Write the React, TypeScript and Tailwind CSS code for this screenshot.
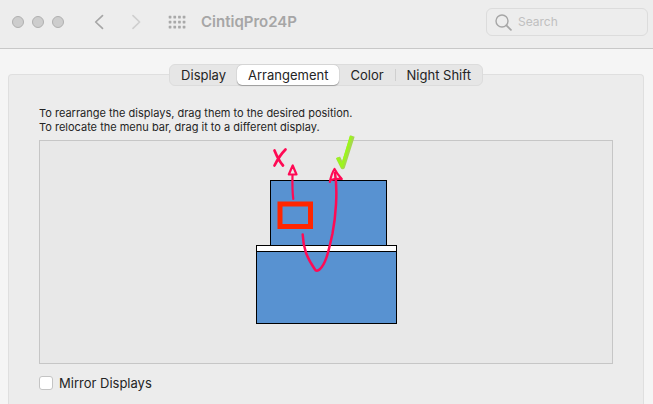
const instructions = [
  "To rearrange the displays, drag them to the desired position.",
  "To relocate the menu bar, drag it to a different display.",
];

function Toolbar() {
  return (
    <header className="flex h-[49px] items-center border-b border-[#c8c8c8] bg-[#ededed] pr-[5px] pb-1 pl-3">
      <div className="flex gap-2">
        <button aria-label="Close" className="size-3 rounded-full border border-[#b0b0b0] bg-[#cdcdcd]" />
        <button aria-label="Minimize" className="size-3 rounded-full border border-[#b0b0b0] bg-[#cdcdcd]" />
        <button aria-label="Zoom" className="size-3 rounded-full border border-[#b0b0b0] bg-[#cdcdcd]" />
      </div>
      <div className="ml-7 flex gap-6">
        <button aria-label="Back" className="text-[#a6a6a6]">
          <svg width="14" height="16" viewBox="0 0 14 16" fill="none" stroke="currentColor" strokeWidth="1.7" strokeLinecap="round" strokeLinejoin="round">
            <path d="M10.5 1.7 3.7 8l6.8 6.3" />
          </svg>
        </button>
        <button aria-label="Forward" className="text-[#cfcfcf]">
          <svg width="14" height="16" viewBox="0 0 14 16" fill="none" stroke="currentColor" strokeWidth="1.7" strokeLinecap="round" strokeLinejoin="round">
            <path d="M3 1.7 9.6 8 3 14.3" />
          </svg>
        </button>
      </div>
      <button aria-label="Show all" className="ml-6 text-[#a9a9a9]">
        <svg width="18" height="14" viewBox="0 0 18 14" fill="currentColor">
          {[0, 5, 10].map((y) =>
            [0, 4.7, 9.4, 14].map((x) => (
              <rect key={`${x}-${y}`} x={x + 0.7} y={y + 0.7} width="2.7" height="2.7" rx=".4" />
            ))
          )}
        </svg>
      </button>
      <h1 className="ml-[15px] text-[15px] font-semibold text-[#a6a6a6]">CintiqPro24P</h1>
      <label className="ml-auto flex h-7 w-[162px] items-center gap-1.5 rounded-md border border-[#dcdcdc] px-2">
        <svg className="shrink-0 text-[#a6a6a6]" width="17" height="17" viewBox="0 0 17 17" fill="none" stroke="currentColor" strokeWidth="1.4" strokeLinecap="round">
          <circle cx="7" cy="7" r="6" />
          <path d="m11.4 11.4 4.5 4.5" strokeWidth="1.8" />
        </svg>
        <input
          type="search"
          placeholder="Search"
          aria-label="Search"
          className="w-full min-w-0 bg-transparent text-xs outline-none placeholder:text-[#c0c0c0]"
        />
      </label>
    </header>
  );
}

function Tabs() {
  return (
    <nav className="relative z-10 mx-auto flex h-[22px] w-fit items-stretch rounded-md border border-[#dcdcdc] bg-[#e6e6e6] text-[13px] leading-5">
      <button className="px-[11px]">Display</button>
      <button className="rounded-[5px] bg-white px-[11px] shadow-[0_0_1px_#0005,0_1px_1px_#0004]">Arrangement</button>
      <button className="px-[11px]">Color</button>
      <span className="my-1 w-px bg-[#cfcfcf]" />
      <button className="px-[11px]">Night Shift</button>
    </nav>
  );
}

function Annotations() {
  return (
    <svg
      className="pointer-events-none absolute top-0 left-0 overflow-visible"
      width="140"
      height="144"
      viewBox="0 0 140 144"
      fill="none"
      strokeLinecap="round"
      strokeLinejoin="round"
    >
      <rect x="24" y="24" width="30.5" height="22.5" stroke="#ff2600" strokeWidth="5" strokeLinejoin="miter" />
      <g stroke="#ff0a54" strokeWidth="2.2">
        <path d="M18.500-29.500c2 5 5 11 8.500 15M29.500-30.500c-4 4-8 10-11 16" strokeWidth="2.7" />
        <path d="M37.300 19C36.300 12 36.300 4 36.500-5" />
        <path d="m36.700-14.500-3.900 9h7.700z" />
        <path d="M46.700 54.500c.6 14 4 23 12.300 35 .6 1.500 3 1.500 4.500 0 7-6 9.500-21 13-36C79.500 38 82 12 79-7" strokeWidth="2.500" />
        <path d="M73.800 2c1-5 2-9 4.700-13 2 4 4.500 7 7.300 10-4-.3-8 0-11.500 1.200" />
      </g>
      <path d="m82-22.500 4.700 9.500L96.500-44" stroke="#a5d94b" strokeWidth="4.5" strokeLinecap="butt" />
      <path d="m81.300-22.500 4.700 9L95-44" stroke="#9cf51c" strokeWidth="2.6" strokeLinecap="butt" />
    </svg>
  );
}

function Arrangement() {
  return (
    <div className="flex h-56 items-center justify-center border border-[#c6c6c6] bg-[#e8e8e8]">
      <div className="relative h-36 w-[140px]">
        <div className="absolute top-0 left-3.5 h-[66px] w-[117px] border border-black bg-[#5892d1]" />
        <div className="absolute top-[65px] left-0 h-[79px] w-[141px] border border-black bg-[#5892d1]">
          <div className="h-1.5 border-b border-black bg-white" />
        </div>
        <Annotations />
      </div>
    </div>
  );
}

export default function App() {
  return (
    <div className="flex min-h-screen flex-col bg-[#f5f5f5] font-['Inter','Liberation_Sans',sans-serif] text-[#242424]">
      <Toolbar />
      <main className="flex grow flex-col pt-[15px] pr-[9px] pl-2">
        <Tabs />
        <section className="-mt-3 grow rounded-t border border-b-0 border-[#dfdfdf] bg-[#ececec] px-[30px] pt-[31px]">
          <div className="mb-1.5 text-[11px] leading-[14px]">
            {instructions.map((line) => (
              <p key={line}>{line}</p>
            ))}
          </div>
          <Arrangement />
          <label className="mt-[11px] flex w-fit items-center gap-1.5 text-[13px] leading-4">
            <input
              type="checkbox"
              className="size-3.5 appearance-none rounded-[3px] border border-[#c4c4c4] bg-white"
            />
            Mirror Displays
          </label>
        </section>
      </main>
    </div>
  );
}
